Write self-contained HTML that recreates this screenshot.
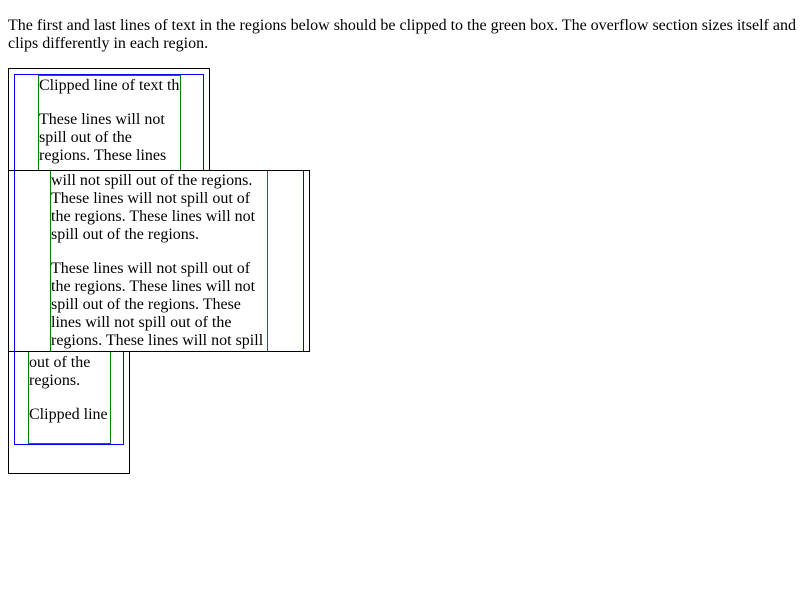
<!DOCTYPE html>
<html><head><style>
body{margin:0;font-family:"Liberation Serif","Times New Roman",serif;font-size:16px;line-height:18px;color:#000;background:#fff}
.a{position:absolute;box-sizing:border-box}
.k{border:1px solid #000;overflow:hidden}
.b{border:1px solid #00f}
.g{border:1px solid #008000}
.c{overflow:hidden}
.t{position:absolute;white-space:nowrap;left:0}
</style></head><body>
<div class="a" style="left:8px;top:17px;width:790px">The first and last lines of text in the regions below should be clipped to the green box. The overflow section sizes itself and clips differently in each region.</div>

<!-- region 1 -->
<div class="a k" style="left:8px;top:68px;width:202px;height:103px">
 <div class="a b" style="left:5px;top:5px;width:190px;height:200px"></div>
 <div class="a g" style="left:29px;top:6px;width:143px;height:200px"></div>
 <div class="a c" style="left:30px;top:7px;width:141px;height:100px">
  <div class="t" style="top:1px">Clipped line of text that</div>
  <div class="t" style="top:35px">These lines will not</div>
  <div class="t" style="top:53px">spill out of the</div>
  <div class="t" style="top:71px">regions. These lines</div>
 </div>
</div>

<!-- region 2 -->
<div class="a k" style="left:8px;top:170px;width:302px;height:182px">
 <div class="a b" style="left:5px;top:-10px;width:290px;height:300px"></div>
 <div class="a g" style="left:41px;top:-10px;width:218px;height:300px"></div>
 <div class="a c" style="left:42px;top:0;width:216px;height:181px">
  <div class="t" style="top:1px">will not spill out of the regions.</div>
  <div class="t" style="top:19px">These lines will not spill out of</div>
  <div class="t" style="top:37px">the regions. These lines will not</div>
  <div class="t" style="top:55px">spill out of the regions.</div>
  <div class="t" style="top:89px">These lines will not spill out of</div>
  <div class="t" style="top:107px">the regions. These lines will not</div>
  <div class="t" style="top:125px">spill out of the regions. These</div>
  <div class="t" style="top:143px">lines will not spill out of the</div>
  <div class="t" style="top:161px">regions. These lines will not spill</div>
 </div>
</div>

<!-- region 3 -->
<div class="a k" style="left:8px;top:351px;width:122px;height:123px">
 <div class="a b" style="left:5px;top:-10px;width:110px;height:103px"></div>
 <div class="a g" style="left:19px;top:-10px;width:83px;height:102px"></div>
 <div class="a c" style="left:20px;top:0;width:81px;height:91px">
  <div class="t" style="top:2px">out of the</div>
  <div class="t" style="top:20px">regions.</div>
  <div class="t" style="top:54px">Clipped line of text</div>
 </div>
</div>
</body></html>
